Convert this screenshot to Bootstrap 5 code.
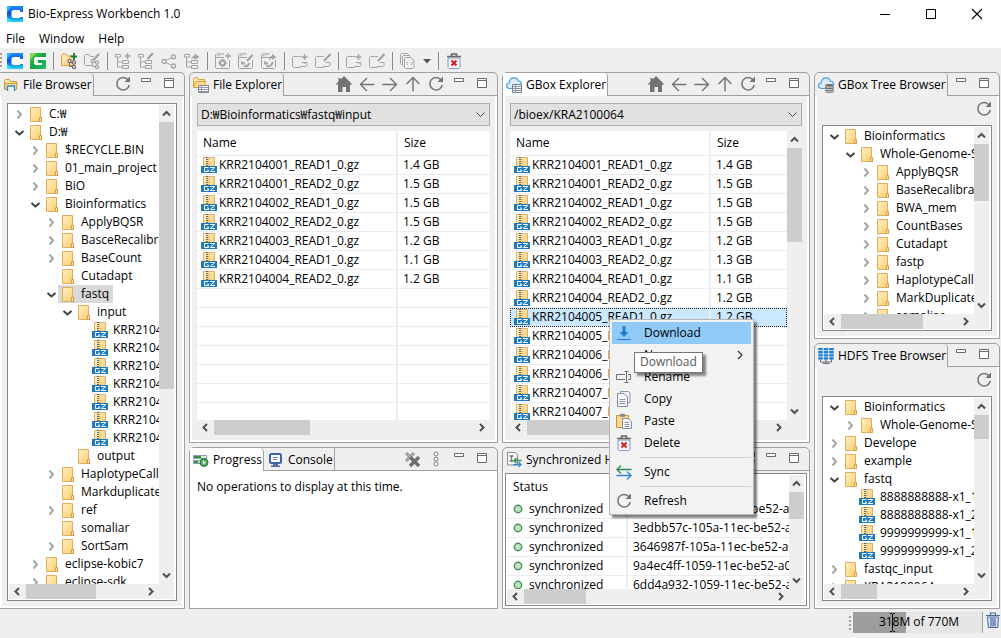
<!DOCTYPE html>
<html lang="en">
<head>
<meta charset="utf-8">
<meta name="viewport" content="width=device-width, initial-scale=1">
<title>Bio-Express Workbench 1.0</title>
<link href="https://cdn.jsdelivr.net/npm/bootstrap@5.3.0/dist/css/bootstrap.min.css" rel="stylesheet">
<style>
:root{--chrome:#efefef;--line:#a0a0a0;--well:#828790;--thumb:#cdcdcd;--ink:#000}
body{font:12px/18px "Open Sans","Noto Sans CJK KR",sans-serif;color:var(--ink);background:var(--chrome)}
button,select{font:inherit;color:inherit}
svg{display:block;flex:none}
.ic{width:16px;height:16px}
.titlebar{height:28px;padding:0 16px 0 7px;gap:5px}
.winbtns{gap:30px}
.menubar{height:20px;padding:0 6px;gap:14px;line-height:22px}
.menubar a,.menubar a:hover{color:var(--ink);text-decoration:none}
.toolbar{height:24px;gap:7px;padding:2px 7px 0;position:relative}
.grip{width:2px;height:16px;background:repeating-linear-gradient(#a39f98 0 2px,transparent 2px 4px)}
.toolbar .grip{position:absolute;left:0}
.tool{background:none;border:0;padding:0;display:block}
.sep{width:1px;height:18px;background:#8c8c8c}
.workbench{display:grid;grid-template-columns:185fr 309fr 308fr 186fr;gap:4px;padding-right:1px;min-height:0}
.stack{gap:4px;min-height:0;min-width:0}
.pane{border:1px solid var(--line);border-radius:5px 5px 0 0;min-height:0;min-width:0;flex:1 1 0;position:relative}
.upper{flex-grow:372}.lower{flex-grow:161}
.upper-r{flex-grow:267}.lower-r{flex-grow:266}
.pane-first{border-left:0;border-top-left-radius:0}
.pane-head{height:23px;flex:none}
.pane-tab{gap:4px;padding:0 1px 0 3px;border:0;border-right:1px solid var(--line);border-top-right-radius:4px;background:transparent;white-space:nowrap}
.pane-tab.idle{border-radius:0;padding:0 1px 0 4px;background:var(--chrome);box-shadow:inset 0 -1px var(--line)}
.pane-tab.lit{background:#fff}
.pane-tools{gap:7px;padding:3px 7px 0 2px;border-bottom:1px solid var(--line);flex:1 1 auto;justify-content:flex-end;align-items:flex-start;min-width:0;overflow:hidden}
.pane-body{border:2px solid #fff;border-top:0;padding:7px 5px 5px;flex:1 1 0;min-height:0;min-width:0;background:var(--chrome)}
.pane-body.flush{padding:2px 0 0}
.pane-body.plain{background:#fff;padding:7px 5px}
.localbar{height:29px;margin-top:-7px;flex:none;padding:5px 0 0}
.path.form-select{height:23px;line-height:17px;padding:2px 22px 2px 3px;border:1px solid #adadad;border-radius:0;font-size:12px;flex:none;margin-bottom:5px;color:var(--ink);
 background:#e1e1e1 url("data:image/svg+xml,%3Csvg xmlns='http://www.w3.org/2000/svg' viewBox='0 0 9 9'%3E%3Cpath d='M.5 2.5l4 4 4-4' fill='none' stroke='%23444'/%3E%3C/svg%3E") no-repeat right 4px center/9px 9px}
.scrollbox{display:grid;grid-template:minmax(0,1fr) 15px/minmax(0,1fr) 15px;flex:1 1 0;min-height:0;background:var(--chrome)}
.scrollbox.boxed{border:1px solid var(--well);padding:1px 2px 1px 1px;background:#fff}
.scrollbox.nov{grid-template-columns:minmax(0,1fr)}
.view{background:#fff;overflow:hidden;min-width:0}
.bar{background:var(--chrome);display:flex;align-items:center}
.bar .track{flex:1 1 0;align-self:stretch}
.bar .thumb{background:var(--thumb)}
.bar svg{width:17px;height:15px}
.bar.v{flex-direction:column}
.bar.v svg{width:15px;height:17px}
.corner{background:var(--chrome)}
.twig{height:18px;white-space:nowrap}
.twig .chev{width:13px;height:18px;flex:none}
.twig .leaf{gap:5px;padding:0 4px 0 2px;height:18px;flex:none}
.twig .leaf.picked{background:#d9d9d9}
.filegrid{table-layout:fixed;width:100%;border-collapse:separate;border-spacing:0}
.filegrid th,.filegrid td{height:19px;padding:0 0 0 5px;border-bottom:1px solid #ececf0;white-space:nowrap;overflow:hidden;font-weight:400;line-height:18px}
.filegrid th{height:25px;padding-left:6px}
.filegrid .c1{width:201px;border-right:2px solid #ececf2}
.filegrid .c1 .cell{gap:2px}
.filegrid td.c1{padding-left:4px}
.filegrid.sync .c1{width:121px}
.filegrid.sync th{border-color:transparent}
.filegrid.sync td.c1{padding-left:6px}
.filegrid.sync .c1 .cell{gap:6px}
.filegrid.sync th.c1{padding-left:6px}
tr.picked{background:#cce8ff;outline:1px dotted #222;outline-offset:-1px}
.ctx.dropdown-menu{position:absolute;left:106px;top:246px;width:145px;min-width:0;padding:2px;border:1px solid #b5b5b5;border-radius:0;background:#f2f2f2;box-shadow:3px 3px 2px rgba(0,0,0,.5);font-size:12px;z-index:20}
.ctx .dropdown-item{display:flex;align-items:center;height:22px;padding:0 7px 0 4px;gap:12px;color:var(--ink);line-height:18px}
.ctx .dropdown-item.active{background:#91c9f7}
.ctx .dropdown-divider{margin:3px 0 3px 28px;border-color:#d2d2d2}
.tip{position:absolute;left:131px;top:279px;height:21px;padding:0 5px;border:1px solid #767676;background:#fff;color:#575757;box-shadow:3px 3px 2px rgba(0,0,0,.45);z-index:30;line-height:18px}
.status{height:29px;padding:3px 0 0;gap:2px;flex:none}
.heap{width:130px;height:21px;background:#e6e6e6;border-radius:0;position:relative;font-size:12px;line-height:20px;border-right:1px solid var(--line)}
.heap .progress-bar{background:#9d9d9d}
.heap .amount{position:absolute;inset:0 0 0 3px;text-align:center}
.heap .caret-i{position:absolute;left:36px;top:1px}
</style>
</head>
<body>
<svg width="0" height="0" class="position-absolute" aria-hidden="true">
<defs>
 <linearGradient id="gf" x1="0" y1="0" x2="1" y2="1"><stop offset="0" stop-color="#fff0c4"/><stop offset="1" stop-color="#fccb6c"/></linearGradient>
 <linearGradient id="gc" x1="0" y1="0" x2="0" y2="1"><stop offset="0" stop-color="#1c8dfc"/><stop offset=".5" stop-color="#0a4fe0"/><stop offset="1" stop-color="#28d7f2"/></linearGradient>
 <linearGradient id="gg" x1="0" y1="0" x2="1" y2="1"><stop offset="0" stop-color="#5cc93c"/><stop offset=".5" stop-color="#12a24a"/><stop offset="1" stop-color="#27c36a"/></linearGradient>
 <symbol id="logoC" viewBox="0 0 16 16"><path d="M0 0h16v16H0z" fill="url(#gc)"/><path d="M0 0h5L0 6z" fill="#27b6fb"/><path d="M0 16v-5l5 5z" fill="#2fe0f0"/><path d="M6 4h7v2h3v5h-3v1H6l-1.500-1.500v-5z" fill="#fff"/></symbol>
 <symbol id="logoG" viewBox="0 0 16 16"><path d="M0 0h16v16H0z" fill="url(#gg)"/><path d="M0 0h6L0 7z" fill="#7ed957"/><path d="M5.500 4H16v3H8v3h4v2H5.500L4 10.500v-5z" fill="#fff"/></symbol>
 <symbol id="folder" viewBox="0 0 16 16"><path d="M2.500 1.500h10v10h1v4h-11z" fill="url(#gf)" stroke="#dfae5c"/><path d="M11.500 11.500h2v4h-2z" fill="#fde3a0" stroke="#d69f45"/></symbol>
 <symbol id="gz" viewBox="0 0 16 16"><path d="M2.500.5h11v10h-11z" fill="url(#gf)" stroke="#d9b070"/><path d="M6 0v10" stroke="#6d675c" stroke-width="2" stroke-dasharray="1 1"/><path d="M8 0v10" stroke="#a99c80" stroke-dasharray="1 1" /><path d="M0 9h16v7H0z" fill="#1c7ac2"/><path d="M7.500 10.500H3.500v4h4v-1.500H6M9 10.500h4.500v.500L9.500 14v.500H14" fill="none" stroke="#fff" stroke-width="1"/></symbol>
 <symbol id="cr" viewBox="0 0 13 18"><path d="M4.500 5.500L8 9.500l-3.500 4" fill="none" stroke="#a6a6a6" stroke-width="2"/></symbol>
 <symbol id="cd" viewBox="0 0 13 18"><path d="M2.500 8L6.500 11.500 10.500 8" fill="none" stroke="#404040" stroke-width="2"/></symbol>
 <symbol id="au" viewBox="0 0 15 17"><path d="M4 10.500L7.500 7 11 10.500" fill="none" stroke="#505050" stroke-width="2"/></symbol>
 <symbol id="ad" viewBox="0 0 15 17"><path d="M4 6.500L7.500 10 11 6.500" fill="none" stroke="#505050" stroke-width="2"/></symbol>
 <symbol id="al" viewBox="0 0 17 15"><path d="M10 4L6.500 7.500 10 11" fill="none" stroke="#505050" stroke-width="2"/></symbol>
 <symbol id="ar" viewBox="0 0 17 15"><path d="M7 4l3.500 3.500L7 11" fill="none" stroke="#505050" stroke-width="2"/></symbol>
 <symbol id="refresh" viewBox="0 0 16 16"><path d="M13 3.700A6.300 6.300 0 1 0 14.300 9" fill="none" stroke="#737373" stroke-width="1.500"/><path d="M15 .5v5.500H9.500z" fill="#737373"/></symbol>
 <symbol id="min" viewBox="0 0 16 16"><path d="M3.500 2.500h9v3h-9z" fill="#fff" stroke="#6a6a6a"/></symbol>
 <symbol id="max" viewBox="0 0 16 16"><path d="M3.500 2.500h9v9h-9zM3.500 4.500h9" fill="#fff" stroke="#6a6a6a"/></symbol>
 <symbol id="home" viewBox="0 0 16 16"><path d="M8 0l8 8-1 1-1-.8V16h-4v-5H6.500v5H2V8.200L1 9 0 8l2.500-2.500V2h2v1.500z" fill="#737373"/></symbol>
 <symbol id="back" viewBox="0 0 16 16"><path d="M15.500 8.500H1.500M8 2L1.500 8.500 8 15" fill="none" stroke="#737373" stroke-width="1.400"/></symbol>
 <symbol id="fwd" viewBox="0 0 16 16"><path d="M.5 8.500h14M8 2l6.500 6.500L8 15" fill="none" stroke="#737373" stroke-width="1.400"/></symbol>
 <symbol id="up" viewBox="0 0 16 16"><path d="M8 15.500v-14M1.500 8L8 1.500 14.500 8" fill="none" stroke="#737373" stroke-width="1.400"/></symbol>
 <symbol id="tabfolder" viewBox="0 0 16 16"><path d="M1.500 12.500v-9l1-1h4l1 2h6v8z" fill="url(#gf)" stroke="#cf9a3e"/><path d="M2 6.500h12l-.5 6H2z" fill="#ffdf91" stroke="#cf9a3e"/><path d="M4.500 14v-5h7v5" fill="#e9f2fb" stroke="#3d86cc" stroke-width="1.300"/></symbol>
 <symbol id="tabexp" viewBox="0 0 16 16"><path d="M.5 10.500v-9l1-1h3l1 2h6v8z" fill="url(#gf)" stroke="#d8a044"/><path d="M.5 10.500L3 4.500h9.500l-1 6z" fill="#ffdc8c" stroke="#d8a044"/><path d="M5.500 8.500h10v7h-10z" fill="#fff" stroke="#7c8896"/><path d="M6 10.500h9M6 12.500h9M6 14.500h9M8.500 9v6" stroke="#8d99a8"/></symbol>
 <symbol id="cloud" viewBox="0 0 16 16"><path d="M4 11.500C1.500 11.500.6 10 .6 8.500.6 7 1.800 6 3.200 6 3.200 2.500 5.500.8 8 .8c2.200 0 3.800 1.400 4.200 3.200 2 0 3.200 1.500 3.200 3.500 0 1.500-.9 3-2.400 3.500z" fill="#dcecfb" stroke="#4a9be2" stroke-width="1.200"/></symbol>
 <symbol id="gboxe" viewBox="0 0 16 16"><use href="#cloud" width="16" height="16"/><path d="M6.500 7.500h9v8h-9z" fill="#fff" stroke="#74808c"/><path d="M7 9.500h8M7 11.500h8M7 13.500h8M9.500 8v7" stroke="#8a949e"/></symbol>
 <symbol id="gboxt" viewBox="0 0 16 16"><use href="#cloud" width="16" height="16"/><path d="M7 8.500c0-2 9-2 9 0v6c0 2-9 2-9 0z" fill="#6f6f6f"/><path d="M7 9.300c1 1.200 8 1.200 9 0M7 11.800c1 1.200 8 1.200 9 0M7 14c1 1.200 8 1.200 9 0" fill="none" stroke="#fff" stroke-width=".8"/></symbol>
 <symbol id="hdfs" viewBox="0 0 16 16"><path d="M2.500 0v12M8 0v12M13.500 0v12" fill="none" stroke="#1f7fd1" stroke-width="4.500" stroke-dasharray="2.300 .8"/><path d="M2.500 11v3h11v-3M8 11v5M4.500 15.500h7" fill="none" stroke="#66717c"/></symbol>
 <symbol id="prog" viewBox="0 0 16 16"><path d="M.5 3.500h13v3H.5zM.5 8.500h7v3h-7z" fill="#e3efe3" stroke="#8b9bb0"/><path d="M1 4h7v2H1zM1 9h4v2H1z" fill="#319145"/><circle cx="11" cy="10.500" r="4" fill="#4da65a" stroke="#26773a"/><path d="M9.800 8.300v4.400l3.400-2.200z" fill="#fff"/></symbol>
 <symbol id="cons" viewBox="0 0 16 16"><rect x="2" y="2" width="11" height="9" rx="1.500" fill="#fff" stroke="#3c64a6" stroke-width="2"/><path d="M5 5.500h5M5 7.500h4" stroke="#6d7fa0"/><path d="M5 12h5v1.500h2V15H3v-1.500h2z" fill="#4d70ad"/></symbol>
 <symbol id="synch" viewBox="0 0 16 16"><path d="M1.500.5h8l2 2.500v10h-10z" fill="#f7f7f7" stroke="#8c8c8c"/><path d="M3.500 4h4M3.500 9h4M5.500 4v5" stroke="#777" stroke-width="1.300"/><path d="M15.500 8.500H8M10.500 6L8 8.500l2.500 2.500" fill="none" stroke="#2e9150" stroke-width="1.300"/><path d="M7.500 12.500H15M12.500 10l2.500 2.500-2.500 2.500" fill="none" stroke="#2f86d8" stroke-width="1.300"/></symbol>
 <symbol id="xx" viewBox="0 0 16 16"><path d="M1 2l8 8M9 2l-8 8" stroke="#8a8a8a" stroke-width="3"/><path d="M1.500 2.500l7 7M8.500 2.500l-7 7" stroke="#d5d5d5"/><path d="M5 6l9 9M14 6l-9 9" stroke="#6f6f6f" stroke-width="3.500"/></symbol>
 <symbol id="dots" viewBox="0 0 16 16"><g fill="#fff" stroke="#7d7d7d"><circle cx="8" cy="3" r="2"/><circle cx="8" cy="8" r="2"/><circle cx="8" cy="13" r="2"/></g></symbol>
 <symbol id="nodes" viewBox="0 0 16 16"><path d="M8.500 8v5.500h3M8.500 9.500h3" fill="none" stroke="currentColor"/><g fill="#efefef" stroke="currentColor" stroke-width="1.200"><circle cx="8.500" cy="8" r="1.600"/><circle cx="13" cy="9.500" r="1.600"/><circle cx="13" cy="14" r="1.600"/></g></symbol>
 <symbol id="newf" viewBox="0 0 16 16"><path d="M.5 12.500v-10l1-1.500h3.500l1.500 2h6v9.500z" fill="url(#gf)" stroke="#d8a044"/><path d="M13 0v7M9.500 3.500h7" stroke="#1f7d3b" stroke-width="1.800"/><use href="#nodes" width="16" height="16" color="#6b6b6b"/></symbol>
 <symbol id="editf" viewBox="0 0 16 16"><path d="M8 12.500H1.500l-1-1V2.500l1-1h3.500l1.500 2H10" fill="none" stroke="currentColor"/><path d="M15 1L9.500 7" stroke="currentColor" stroke-width="2.200"/><use href="#nodes" width="16" height="16"/></symbol>
 <symbol id="tree" viewBox="0 0 16 16"><path d="M.5 1.500h5v2.500h-5zM7.500 7.500h6v3h-6zM7.500 12.500h6v3h-6zM2.500 4v10h5M2.500 9h5" fill="none" stroke="currentColor"/></symbol>
 <symbol id="treeadd" viewBox="0 0 16 16"><use href="#tree" width="16" height="16"/><path d="M12.500 0v6M9.500 3h6" stroke="currentColor" stroke-width="1.600"/></symbol>
 <symbol id="treeedit" viewBox="0 0 16 16"><use href="#tree" width="16" height="16"/><path d="M15 0L9.500 6" stroke="currentColor" stroke-width="2.400"/></symbol>
 <symbol id="treego" viewBox="0 0 16 16"><use href="#tree" width="16" height="16"/><path d="M7.500 6c0-2 1-3 3-3V.5L15.500 4 10.500 7V5c-1.500 0-2.500.2-3 1z" fill="currentColor"/></symbol>
 <symbol id="share" viewBox="0 0 16 16"><path d="M3 8.500L12 4M3 8.500l9 4.500" stroke="currentColor"/><g fill="#efefef" stroke="currentColor" stroke-width="1.300"><circle cx="3" cy="8.500" r="2"/><circle cx="12.500" cy="3.800" r="2"/><circle cx="12.500" cy="13" r="2"/></g></symbol>
 <symbol id="win" viewBox="0 0 16 16"><path d="M9 .9H1.500l-1 1v12.600l1 1h12l1-1V7M.5 4.500H9M2 2.700h1M4 2.700h1" fill="none" stroke="currentColor"/></symbol>
 <symbol id="winadd" viewBox="0 0 16 16"><use href="#win" width="16" height="16"/><path d="M13 0v6M10 3h6" stroke="currentColor" stroke-width="1.300"/><circle cx="7.500" cy="10" r="2.500" fill="none" stroke="currentColor" stroke-width="2.200"/><path d="M7.500 5.800v8.400M3.300 10h8.400" stroke="currentColor" stroke-width="1.500" stroke-dasharray="1.800 4.800"/></symbol>
 <symbol id="winedit" viewBox="0 0 16 16"><use href="#win" width="16" height="16"/><path d="M14.500 2L9 8" stroke="currentColor" stroke-width="2.200"/><path d="M4 8.500v2h3M6 13c3 1 5-1 5-3" fill="none" stroke="currentColor" stroke-width="2"/></symbol>
 <symbol id="wingo" viewBox="0 0 16 16"><use href="#win" width="16" height="16"/><path d="M8 7c0-3 1-4 3-4V.8L15.500 4 11 7V5.200c-1.500 0-2 .8-2 1.800z" fill="currentColor"/><path d="M4 8.500v2h3M5.500 13c3 1 6-1 6-4" fill="none" stroke="currentColor" stroke-width="2"/></symbol>
 <symbol id="boxadd" viewBox="0 0 16 16"><path d="M9 3.500H6.500H1.500l-1 1v9l1 1h7M8 13.500h6l1-1v-3H9.500M13 9v2" fill="none" stroke="currentColor"/><path d="M12.500 1v6M9.500 4h6" stroke="currentColor" stroke-width="1.400"/></symbol>
 <symbol id="boxedit" viewBox="0 0 16 16"><path d="M9 3.500H6.500H1.500l-1 1v9l1 1h7M8 13.500h6l1-1v-3h-4" fill="none" stroke="currentColor"/><path d="M15.500 1L9 8" stroke="currentColor" stroke-width="2.200"/></symbol>
 <symbol id="pages" viewBox="0 0 16 16"><path d="M2.500 11.500h-1l-1-1V1.500l1-1h6l1 1M4.500 13.500h-1l-1-1v-9l1-1h6l1 1M5.500 15.500l-1-1v-9l1-1h5l3.500 3v7l-1 1zM8 9L6.500 10.500 8 12M11 9l1.500 1.500L11 12" fill="none" stroke="currentColor"/></symbol>
 <symbol id="del" viewBox="0 0 16 16"><path d="M2 5h12v9.500l-1 1H3l-1-1z" fill="#f1f5fc" stroke="#8c98b5"/><path d="M1 3.500h14M5.500 3V1h5v2" fill="none" stroke="#666" stroke-width="1.500"/><path d="M5.500 7.500l5 5M10.500 7.500l-5 5" stroke="#cf1f1f" stroke-width="2"/></symbol>
 <symbol id="dl" viewBox="0 0 16 16"><path d="M8 1v8" stroke="#1f7fd6" stroke-width="3"/><path d="M3.500 7h9L8 12z" fill="#1f7fd6"/><path d="M1 14.500h14" stroke="#1f7fd6"/></symbol>
 <symbol id="ren" viewBox="0 0 16 16"><path d="M9 5.500H.5v5H9M12 5.500h2.500v5H12M10.500 2.500v11M8.500 2.500h4M8.500 13.500h4" fill="none" stroke="#6e6e6e"/></symbol>
 <symbol id="copy" viewBox="0 0 16 16"><path d="M4.500.5h8l1.500 1.500v9.500h-9.500z" fill="#eef0f4" stroke="#9097a6"/><path d="M1.500 2.500H8L11.500 6v9.500h-10z" fill="#f6f8fc" stroke="#858da0"/><path d="M3.500 8.500h6M3.500 10.500h6M3.500 12.500h6" stroke="#8e98ae"/></symbol>
 <symbol id="paste" viewBox="0 0 16 16"><path d="M.5 2.500h12v12H.5z" fill="#fbd88a" stroke="#c9953c"/><path d="M4 .8h5v3H4z" fill="#8a8a8a"/><path d="M6.500 5.500H12l3.500 3v7h-9z" fill="#f6f8fc" stroke="#858da0"/><path d="M8.500 9.500h5M8.500 11.500h5M8.500 13.500h5" stroke="#8e98ae"/></symbol>
 <symbol id="syncm" viewBox="0 0 16 16"><path d="M15.500 5.500H1M5 1.500l-4 4 4 4" fill="none" stroke="#2e8f50" stroke-width="1.400"/><path d="M.5 11.500H15M11 7.500l4 4-4 4" fill="none" stroke="#2f86d8" stroke-width="1.400"/></symbol>
 <symbol id="bin" viewBox="0 0 16 16"><path d="M2.500 5h11l-.8 10.500H3.300z" fill="#d7e3f5" stroke="#48699c"/><path d="M1 3.500h14M5.500 3.500V1h5v2.500M6 6v8.500M8 6v8.500M10 6v8.500" fill="none" stroke="#48699c" stroke-width="1.200"/></symbol>
 <symbol id="ok" viewBox="0 0 10 10"><circle cx="5" cy="5" r="3.700" fill="#bfe6b8" stroke="#4e8b62" stroke-width="1.400"/></symbol>
</defs>
</svg>

<div class="d-flex flex-column vh-100">
 <header class="bg-white">
  <div class="titlebar d-flex align-items-center">
   <svg class="ic"><use href="#logoC"/></svg><span class="me-auto">Bio-Express Workbench 1.0</span>
   <div class="winbtns d-flex">
    <button class="tool" aria-label="Minimize"><svg class="ic"><path d="M3 8.500h10" stroke="#000"/></svg></button>
    <button class="tool" aria-label="Maximize"><svg class="ic"><path d="M3.500 3.500h9v9h-9z" fill="none" stroke="#000"/></svg></button>
    <button class="tool" aria-label="Close"><svg class="ic"><path d="M3 3l10 10M13 3L3 13" stroke="#000" stroke-width="1.100"/></svg></button>
   </div>
  </div>
  <nav class="menubar d-flex" aria-label="Main menu"><a href="#">File</a><a href="#">Window</a><a href="#">Help</a></nav>
 </header>
 <div class="toolbar d-flex align-items-center flex-shrink-0" id="toolbar" role="toolbar" aria-label="Main toolbar"><span class="grip"></span></div>

 <main class="workbench flex-grow-1">
  <section class="pane pane-first d-flex flex-column">
   <div class="pane-head d-flex"><button class="pane-tab d-flex align-items-center"><svg class="ic"><use href="#tabfolder"/></svg>File Browser</button><div class="pane-tools d-flex" data-tools="refresh min max"></div></div>
   <div class="pane-body d-flex flex-column"><div class="scrollbox boxed" data-tree="local" data-v="60" data-h="60"></div></div>
  </section>

  <div class="stack d-flex flex-column">
   <section class="pane upper d-flex flex-column">
    <div class="pane-head d-flex"><button class="pane-tab d-flex align-items-center"><svg class="ic"><use href="#tabexp"/></svg>File Explorer</button><div class="pane-tools d-flex" data-tools="home back fwd up refresh min max"></div></div>
    <div class="pane-body d-flex flex-column">
     <select class="path form-select" aria-label="Local path"><option>D:₩Bioinformatics₩fastq₩input</option></select>
     <div class="scrollbox nov" data-files="local" data-h="37"></div>
    </div>
   </section>
   <section class="pane lower d-flex flex-column">
    <div class="pane-head d-flex"><button class="pane-tab lit d-flex align-items-center"><svg class="ic"><use href="#prog"/></svg>Progress</button><button class="pane-tab idle d-flex align-items-center"><svg class="ic"><use href="#cons"/></svg>Console</button><div class="pane-tools d-flex" data-tools="xx dots min max"></div></div>
    <div class="pane-body plain">No operations to display at this time.</div>
   </section>
  </div>

  <div class="stack d-flex flex-column">
   <section class="pane upper d-flex flex-column">
    <div class="pane-head d-flex"><button class="pane-tab lit d-flex align-items-center"><svg class="ic"><use href="#gboxe"/></svg>GBox Explorer</button><div class="pane-tools d-flex" data-tools="home back fwd up refresh min max"></div></div>
    <div class="pane-body d-flex flex-column">
     <select class="path form-select" aria-label="GBox path"><option>/bioex/KRA2100064</option></select>
     <div class="scrollbox" data-files="gbox" data-v="37" data-h="45"></div>
    </div>
    <div class="ctx dropdown-menu show" role="menu">
     <button class="dropdown-item active" role="menuitem"><svg class="ic"><use href="#dl"/></svg>Download</button>
     <button class="dropdown-item" role="menuitem"><span class="ic"></span><span class="me-auto">New</span><svg width="8" height="10"><path d="M2 1l4 4-4 4" fill="none" stroke="#333" stroke-width="1.200"/></svg></button>
     <button class="dropdown-item" role="menuitem"><svg class="ic"><use href="#ren"/></svg>Rename</button>
     <button class="dropdown-item" role="menuitem"><svg class="ic"><use href="#copy"/></svg>Copy</button>
     <button class="dropdown-item" role="menuitem"><svg class="ic"><use href="#paste"/></svg>Paste</button>
     <button class="dropdown-item" role="menuitem"><svg class="ic"><use href="#del"/></svg>Delete</button>
     <hr class="dropdown-divider">
     <button class="dropdown-item" role="menuitem"><svg class="ic"><use href="#syncm"/></svg>Sync</button>
     <hr class="dropdown-divider">
     <button class="dropdown-item" role="menuitem"><svg class="ic"><use href="#refresh"/></svg>Refresh</button>
    </div>
    <div class="tip" role="tooltip">Download</div>
   </section>
   <section class="pane lower d-flex flex-column">
    <div class="pane-head d-flex"><button class="pane-tab d-flex align-items-center"><svg class="ic"><use href="#synch"/></svg>Synchronized History</button><div class="pane-tools d-flex" data-tools="refresh min max"></div></div>
    <div class="pane-body flush d-flex flex-column"><div class="scrollbox boxed" data-files="sync" data-v="33" data-h="25"></div></div>
   </section>
  </div>

  <div class="stack d-flex flex-column">
   <section class="pane upper-r d-flex flex-column">
    <div class="pane-head d-flex"><button class="pane-tab d-flex align-items-center"><svg class="ic"><use href="#gboxt"/></svg>GBox Tree Browser</button><div class="pane-tools d-flex" data-tools="min max"></div></div>
    <div class="pane-body d-flex flex-column"><div class="localbar d-flex justify-content-end align-items-start" data-tools="refresh"></div><div class="scrollbox boxed" data-tree="gbox" data-v="37" data-h="71"></div></div>
   </section>
   <section class="pane lower-r d-flex flex-column">
    <div class="pane-head d-flex"><button class="pane-tab d-flex align-items-center"><svg class="ic"><use href="#hdfs"/></svg>HDFS Tree Browser</button><div class="pane-tools d-flex" data-tools="min max"></div></div>
    <div class="pane-body d-flex flex-column"><div class="localbar d-flex justify-content-end align-items-start" data-tools="refresh"></div><div class="scrollbox boxed" data-tree="hdfs" data-v="16" data-h="31"></div></div>
   </section>
  </div>
 </main>

 <footer class="status d-flex justify-content-end align-items-start">
  <span class="grip mt-1"></span>
  <div class="heap progress">
   <div class="progress-bar" style="width:41.3%"></div>
   <span class="amount">318M of 770M</span>
   <svg class="caret-i" width="7" height="19"><path d="M1 .5h2M4 .5h2M1 18.500h2M4 18.500h2M3.500 1v17" stroke="#000"/></svg>
  </div>
  <button class="tool" aria-label="Run garbage collector"><svg class="ic"><use href="#bin"/></svg></button>
 </footer>
</div>

<script src="https://cdn.jsdelivr.net/npm/bootstrap@5.3.0/dist/js/bootstrap.bundle.min.js"></script>
<script>
const icon = (id, cls = 'ic') => `<svg class="${cls}"><use href="#${id}"/></svg>`;
const tool = id => `<button class="tool" aria-label="${id}">${icon(id)}</button>`;

// Main toolbar: "|" is a separator, "~" marks a disabled group's colour
const strip = 'logoC logoG | newf ~editf | ~treeadd ~treeedit ~share ~treego | ~winadd ~winedit ~wingo | ~boxadd ~boxedit | ~boxadd ~boxedit | ~pages caret | del';
document.getElementById('toolbar').insertAdjacentHTML('beforeend', strip.split(' ').map(t =>
  t === '|' ? '<span class="sep"></span>' :
  t === 'caret' ? '<button class="tool" aria-label="More"><svg width="8" height="8"><path d="M0 2h8L4 6.500z" fill="#555"/></svg></button>' :
  t[0] === '~' ? `<span style="color:#a3a3a3">${tool(t.slice(1))}</span>`.replace('class="tool"', 'class="tool text-reset"') : tool(t)).join(''));

document.querySelectorAll('[data-tools]').forEach(e => e.innerHTML = e.dataset.tools.split(' ').map(tool).join(''));

// Tree rows: depth, state (+ closed, - open, . none), kind (d folder, z archive), label
const trees = {
  local: ['0+d C:₩','0-d D:₩','1+d $RECYCLE.BIN','1+d 01_main_project','1+d BiO','1-d Bioinformatics','2+d ApplyBQSR','2+d BasceRecalibration','2+d BaseCount','2.d Cutadapt','2-d* fastq','3-d input',
    '4.z KRR2104001_READ1_0.gz','4.z KRR2104001_READ2_0.gz','4.z KRR2104002_READ1_0.gz','4.z KRR2104002_READ2_0.gz','4.z KRR2104003_READ1_0.gz','4.z KRR2104004_READ1_0.gz','4.z KRR2104004_READ2_0.gz',
    '3.d output','2+d HaplotypeCaller','2.d Markduplicates','2+d ref','2.d somaliar','2+d SortSam','1+d eclipse-kobic7','1+d eclipse-sdk'],
  gbox: ['0-d Bioinformatics','1-d Whole-Genome-Seq','2+d ApplyBQSR','2+d BaseRecalibrator','2+d BWA_mem','2+d CountBases','2+d Cutadapt','2+d fastp','2+d HaplotypeCaller','2+d MarkDuplicates','2+d somaliar'],
  hdfs: ['0-d Bioinformatics','1+d Whole-Genome-Seq','0+d Develope','0+d example','0-d fastq','1.z 8888888888-x1_1.gz','1.z 8888888888-x1_2.gz','1.z 9999999999-x1_1.gz','1.z 9999999999-x1_2.gz','0+d fastqc_input','0+d KRA2100064']
};
const twig = r => {
  const [, d, s, k, sel, label] = r.match(/^(\d)(.)(.)(\*?) (.*)$/);
  const chev = s === '.' ? '<span class="chev"></span>' : icon(s === '+' ? 'cr' : 'cd', 'chev');
  return `<li class="twig d-flex" role="treeitem" style="padding-left:${4 + 16 * d}px">${chev}<span class="leaf d-flex align-items-center${sel ? ' picked' : ''}">${icon(k === 'z' ? 'gz' : 'folder')}${label}</span></li>`;
};

const files = {
  local: ['001_READ1 1.4','001_READ2 1.5','002_READ1 1.5','002_READ2 1.5','003_READ1 1.2','004_READ1 1.1','004_READ2 1.2'],
  gbox: ['001_READ1 1.4','001_READ2 1.5','002_READ1 1.5','002_READ2 1.5','003_READ1 1.2','003_READ2 1.3','004_READ1 1.1','004_READ2 1.2','005_READ1 1.2','005_READ2 1.2','006_READ1 1.2','006_READ2 1.2','007_READ1 1.2','007_READ2 1.2'],
  sync: ['41f0b2d8-105a-11ec-be52-a0','3edbb57c-105a-11ec-be52-a0','3646987f-105a-11ec-be52-a0','9a4ec4ff-1059-11ec-be52-a0','6dd4a932-1059-11ec-be52-a0']
};
const row = (ic, a, b, sel) => `<tr${sel ? ' class="picked"' : ''}><td class="c1"><div class="cell d-flex align-items-center">${ic ? icon(ic) : ''}${a}</div></td><td>${b}</td></tr>`;
const grid = k => {
  if (k === 'sync') return '<table class="filegrid sync"><thead><tr><th class="c1">Status</th><th>ID</th></tr></thead><tbody>' +
    files.sync.map(f => row('ok', 'synchronized', f)).join('').replace(/class="ic"/g, 'width="10" height="10"') + '</tbody></table>';
  const rows = files[k].map((f, i) => { const [n, s] = f.split(' '); return row('gz', `KRR2104${n}_0.gz`, s + ' GB', k === 'gbox' && i === 8); });
  while (rows.length < 14) rows.push(row('', '', ''));
  return `<table class="filegrid"><thead><tr><th class="c1">Name</th><th>Size</th></tr></thead><tbody>${rows.join('')}</tbody></table>`;
};

document.querySelectorAll('.scrollbox').forEach(b => {
  const { tree, files: f, v, h } = b.dataset;
  const view = tree ? `<ul class="view list-unstyled m-0" role="tree">${trees[tree].map(twig).join('')}</ul>` : `<div class="view">${grid(f)}</div>`;
  const vert = v ? `<div class="bar v">${icon('au', '')}<div class="track"><div class="thumb" style="height:${v}%"></div></div>${icon('ad', '')}</div>` : '';
  const horz = `<div class="bar">${icon('al', '')}<div class="track"><div class="thumb h-100" style="width:${h}%"></div></div>${icon('ar', '')}</div>`;
  b.innerHTML = view + vert + horz + (v ? '<div class="corner"></div>' : '');
});
</script>
</body>
</html>
